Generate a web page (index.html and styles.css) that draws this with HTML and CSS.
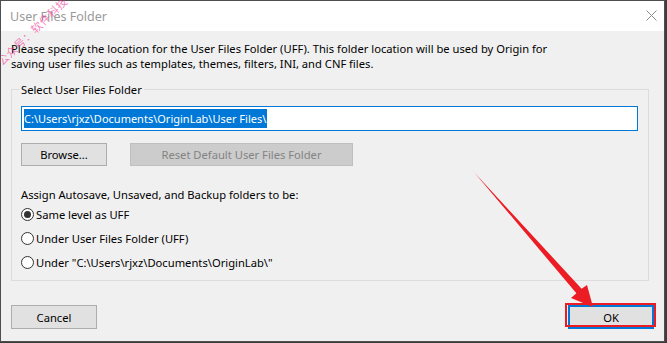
FILE: index.html
```html
<!DOCTYPE html>
<html lang="en">
<head>
  <meta charset="UTF-8">
  <title>User Files Folder</title>
  <link rel="stylesheet" href="styles.css">
</head>
<body>
  <div class="window">
    <div class="titlebar">
      <span class="title">User Files Folder</span>
      <svg class="close" width="11" height="11" viewBox="0 0 11 11">
        <path d="M0.5 0.5 L10.5 10.5 M10.5 0.5 L0.5 10.5" stroke="#8a8a8a" stroke-width="1" fill="none"/>
      </svg>
    </div>

    <div class="watermark">公众号：软件科技</div>

    <div class="content">
      <p class="intro">Please specify the location for the User Files Folder (UFF). This folder location will be used by Origin for saving user files such as templates, themes, filters, INI, and CNF files.</p>

      <fieldset class="group">
        <legend>Select User Files Folder</legend>
        <div class="path-input"><span class="selected">C:\Users\rjxz\Documents\OriginLab\User Files\</span></div>

        <div class="button-row">
          <button class="btn">Browse...</button>
          <button class="btn btn-disabled">Reset Default User Files Folder</button>
        </div>

        <div class="assign-label">Assign Autosave, Unsaved, and Backup folders to be:</div>
        <div class="radio-row"><span class="radio checked"></span>Same level as UFF</div>
        <div class="radio-row"><span class="radio"></span>Under User Files Folder (UFF)</div>
        <div class="radio-row"><span class="radio"></span>Under "C:\Users\rjxz\Documents\OriginLab\"</div>
      </fieldset>

      <div class="footer">
        <button class="btn">Cancel</button>
        <button class="btn btn-default">OK</button>
      </div>
    </div>

    <!-- annotation arrow drawn over the dialog -->
    <svg class="arrow" width="665" height="342" viewBox="0 0 665 342">
      <polygon points="471.5,169.5 580.6,287.8 586,284 592,306 570,297 575.4,292.3 472.5,170.5" fill="#ec1c24"/>
    </svg>
  </div>
</body>
</html>
```

FILE: styles.css
```css
body {
  margin: 0;
  background: #3c3c3c;
  font-family: 'Noto Sans', sans-serif;
  font-size: 11.2px;
  color: #000;
}

.window {
  position: relative;
  width: 663px;
  height: 340px;
  border: 1px solid #4e4e4e;
  background: #f0f0f0;
  display: flex;
  flex-direction: column;
}

.titlebar {
  height: 30px;
  background: #fff;
  display: flex;
  align-items: center;
  justify-content: space-between;
  padding: 0 7px 0 9px;
}

.title {
  color: #9a9a9a;
  font-size: 12.5px;
}

.close {
  margin-top: -1px;
}

.watermark {
  position: absolute;
  left: 2px;
  top: 55px;
  height: 11px;
  line-height: 11px;
  transform: rotate(-44deg);
  transform-origin: left bottom;
  color: rgba(240, 40, 140, 0.6);
  font-family: 'Noto Sans CJK SC', sans-serif;
  font-size: 11px;
  letter-spacing: 0.5px;
  white-space: nowrap;
}

.content {
  flex: 1;
  padding: 10px 10px 0 10px;
}

.intro {
  margin: 0;
  line-height: 15px;
  width: 560px;
}

.group {
  margin: 11px 0 0 0;
  padding: 0 10px 6px 9px;
  width: 638px;
  box-sizing: border-box;
  border: 1px solid #dcdcdc;
}

.group legend {
  padding: 0 2px;
  margin-left: -2px;
  line-height: 15px;
}

.path-input {
  margin-top: 9px;
  height: 25px;
  box-sizing: border-box;
  border: 1px solid #0078d7;
  background: #fff;
  padding: 2px 2px;
  font-size: 11px;
}

.selected {
  display: inline-block;
  background: #0078d7;
  color: #fff;
  line-height: 19px;
  padding-right: 1px;
}

.button-row {
  display: flex;
  gap: 23px;
  margin-top: 12px;
}

.btn {
  font-family: 'Noto Sans', sans-serif;
  font-size: 11.2px;
  height: 24px;
  width: 86px;
  background: #e1e1e1;
  border: 1px solid #adadad;
  padding: 0;
  color: #000;
}

.button-row .btn {
  height: 23px;
}

.btn-disabled {
  width: 223px;
  background: #cccccc;
  border-color: #bfbfbf;
  color: #838383;
}

.assign-label {
  margin-top: 21px;
  line-height: 15px;
}

.radio-row {
  height: 24px;
  display: flex;
  align-items: center;
  gap: 2px;
}

.radio {
  width: 13px;
  height: 13px;
  box-sizing: border-box;
  border: 1px solid #333;
  border-radius: 50%;
  background: #fff;
  display: flex;
  align-items: center;
  justify-content: center;
}

.radio.checked::after {
  content: '';
  width: 7px;
  height: 7px;
  border-radius: 50%;
  background: #333;
}

.footer {
  display: flex;
  justify-content: space-between;
  margin-top: 24px;
}

.btn-default {
  position: relative;
  border: 2px solid #0078d7;
}

.btn-default::after {
  content: '';
  position: absolute;
  left: -5px;
  top: -4px;
  width: 91px;
  height: 24px;
  box-sizing: border-box;
  border: 2px solid #ec1c24;
}

.arrow {
  position: absolute;
  left: 0;
  top: 0;
  pointer-events: none;
}
```
